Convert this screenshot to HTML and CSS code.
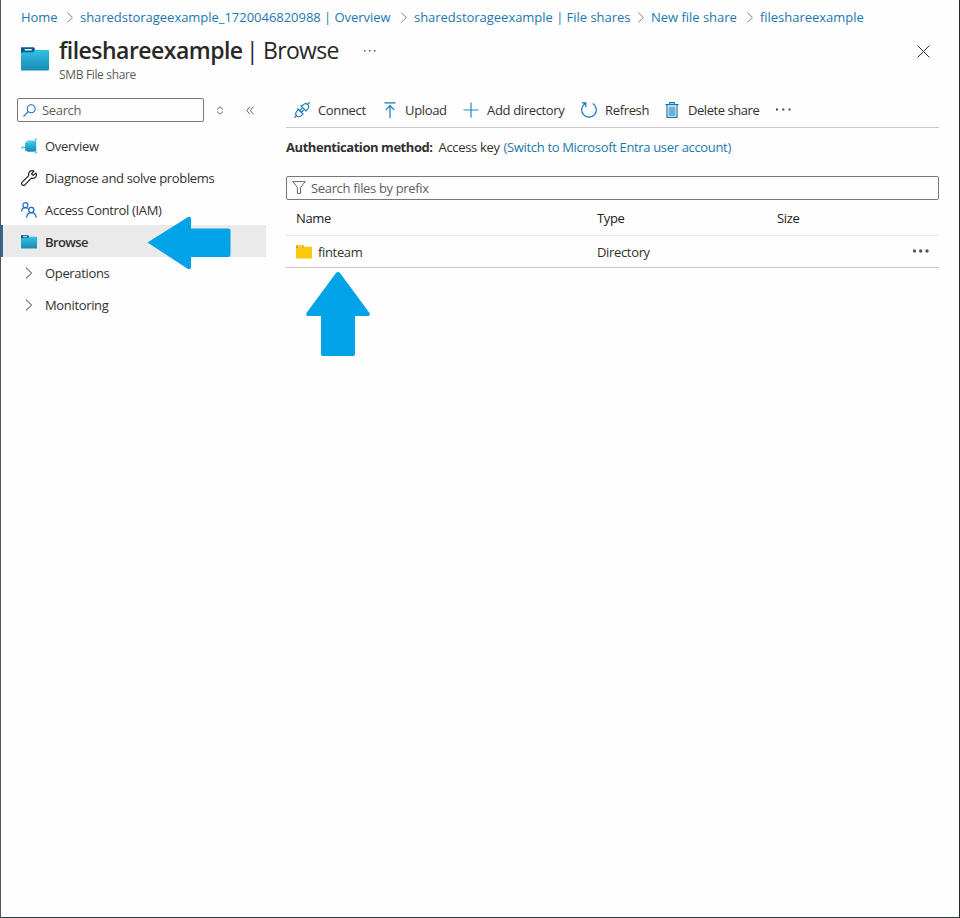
FILE: index.html
```html
<!DOCTYPE html>
<html lang="en">
<head>
    <meta charset="UTF-8">
    <meta name="viewport" content="width=device-width, initial-scale=1.0">
    <title>fileshareexample | Browse</title>
    <link rel="stylesheet" href="styles.css">
</head>
<body>
    <svg width="0" height="0" class="defs">
        <defs>
            <linearGradient id="blue" x1="0" y1="0" x2="0" y2="1">
                <stop offset="0" stop-color="#32c8ea"/>
                <stop offset="1" stop-color="#198ab3"/>
            </linearGradient>
            <symbol id="folder" viewBox="0 0 28 24">
                <path d="M0 1h12.5l1.6 2H28v19.5a1 1 0 0 1-1 1H1a1 1 0 0 1-1-1z" fill="url(#blue)"/>
                <path d="M0 .3h12.3a1.6 1.6 0 0 1 1.4 1.2l.2 1.3-1.6 2.4H2.4L0 5.8z" fill="#005b97"/>
                <rect x="3.5" y="2" width="7.5" height="1.6" rx=".8" fill="#e8f8fd"/>
            </symbol>
            <symbol id="chevron" viewBox="0 0 8 12">
                <path d="M1 .7L6.6 6 1 11.3" fill="none" stroke="currentColor"/>
            </symbol>
        </defs>
    </svg>

    <div class="page">
        <nav class="breadcrumb">
            <span class="crumb"><a>Home</a><svg><use href="#chevron"/></svg></span>
            <span class="crumb"><a>sharedstorageexample_1720046820988 | Overview</a><svg><use href="#chevron"/></svg></span>
            <span class="crumb"><a>sharedstorageexample | File shares</a><svg><use href="#chevron"/></svg></span>
            <span class="crumb"><a>New file share</a><svg><use href="#chevron"/></svg></span>
            <span class="crumb"><a>fileshareexample</a></span>
        </nav>

        <header class="header">
            <svg class="header-icon"><use href="#folder"/></svg>
            <div class="header-text">
                <h1><b>fileshareexample</b> <span>| Browse</span></h1>
                <p>SMB File share</p>
            </div>
            <svg class="header-more" width="12" height="3" viewBox="0 0 12 3" fill="#555"><rect y="1" width="1.5" height="1.5"/><rect x="5" y="1" width="1.5" height="1.5"/><rect x="10" y="1" width="1.5" height="1.5"/></svg>
            <svg class="close" width="13" height="13" viewBox="0 0 13 13"><path d="M.6.6l11.8 11.8M12.4.6L.6 12.4" stroke="#333"/></svg>
        </header>

        <div class="content">
            <aside class="sidebar">
                <div class="search-row">
                    <div class="search">
                        <svg width="13" height="13" viewBox="0 0 13 13" fill="none" stroke="#1474c4" stroke-width="1.1"><circle cx="8.2" cy="4.8" r="4"/><path d="M5.3 7.7L.5 12.5"/></svg>
                        <span>Search</span>
                    </div>
                    <svg class="sort" width="8" height="9" viewBox="0 0 8 9" fill="none" stroke="#666"><path d="M1 3.5L4 .8l3 2.7M1 5.5l3 2.7 3-2.7"/></svg>
                    <svg class="collapse" width="8" height="9" viewBox="0 0 8 9" fill="none" stroke="#666"><path d="M3.8.7L.8 4.5l3 3.8M7.4.7l-3 3.8 3 3.8"/></svg>
                </div>
                <ul class="menu">
                    <li>
                        <svg width="16" height="16" viewBox="0 0 16 16"><path d="M1 9.5h4M14.8 1v14" stroke="#6ccbe8"/><path d="M4 5l11-1.5v9.500l-2 .8H6.5L4 12z" fill="url(#blue)"/><path d="M4 5l2.5-2.500H14l1 1.500z" fill="#4fc8e6"/><circle cx="1.5" cy="9.5" r="1.2" fill="#69c9e4"/><circle cx="14.7" cy="1.3" r="1.1" fill="#69c9e4"/><circle cx="14.7" cy="14.6" r="1.1" fill="#69c9e4"/></svg>
                        <span>Overview</span>
                    </li>
                    <li>
                        <svg width="16" height="16" viewBox="0 0 16 16" fill="none" stroke="#222" stroke-width="1.2" stroke-linejoin="round"><path d="M14.9 3.1l-2.7 2.3-1.7-1.6 2.4-2.7c-2.1-.9-4.2-.2-5 1.7-.4 1-.3 2-.1 2.8L1.2 12.2c-.9 1-.8 2 0 2.7.8.7 1.8.7 2.6-.1l6.6-6.7c1.6.5 3.4.1 4.4-1.3.8-1.2.8-2.5.1-3.7z"/></svg>
                        <span>Diagnose and solve problems</span>
                    </li>
                    <li>
                        <svg width="16" height="16" viewBox="0 0 16 16" fill="none" stroke="#1b67c4" stroke-width="1.2"><circle cx="4.4" cy="3.2" r="2.5"/><path d="M.6 9.5c.1-2.3 1.600-3.800 3.700-3.800 1.100 0 1.900.3 2.600.9"/><circle cx="10.3" cy="8" r="2.600"/><path d="M5.600 15.700c.2-3.200 2.200-5.100 4.800-5.100s4.600 1.900 4.900 5.100"/></svg>
                        <span>Access Control (IAM)</span>
                    </li>
                    <li class="active">
                        <svg width="16" height="14"><use href="#folder"/></svg>
                        <span>Browse</span>
                        <svg class="arrow-left" width="84" height="54" viewBox="0 0 84 54"><path d="M.5 26.5L41 1q3-1 3 2v9.5h37.500q2 0 2 2V39q0 2-2 2H44v10q0 3-3 2z" fill="#00a2e8"/></svg>
                    </li>
                    <li>
                        <svg width="16" height="12"><use href="#chevron"/></svg>
                        <span>Operations</span>
                    </li>
                    <li>
                        <svg width="16" height="12"><use href="#chevron"/></svg>
                        <span>Monitoring</span>
                    </li>
                </ul>
            </aside>

            <main class="main">
                <div class="toolbar">
                    <div class="button">
                        <svg width="16" height="16" viewBox="0 0 16 16" fill="none" stroke="#1474b8" stroke-width="1.1"><path d="M.3 15.7l2.200-2.200M13.500 2.500L15.700.3"/><path d="M7 4l5 5 1.300-1.300c1.800-1.800 1.800-3.700.5-5s-3.200-1.300-5 .5zM4 7l5 5-1.300 1.300c-1.800 1.800-3.700 1.800-5 .5s-1.300-3.200.5-5zM5.700 8.700l2.300-2.300M7.300 10.300l2.300-2.300"/></svg>
                        <span>Connect</span>
                    </div>
                    <div class="button">
                        <svg width="16" height="16" viewBox="0 0 16 16" fill="none" stroke="#1474b8" stroke-width="1.2"><path d="M3.5.8h11M9 16V3.5M4.8 7.8L9 3.5l4.2 4.3"/></svg>
                        <span>Upload</span>
                    </div>
                    <div class="button">
                        <svg width="16" height="16" viewBox="0 0 16 16" stroke="#2c83c3" stroke-width="1.2"><path d="M.5 8h15M8 .5v15"/></svg>
                        <span>Add directory</span>
                    </div>
                    <div class="button">
                        <svg width="16" height="16" viewBox="0 0 16 16" fill="none" stroke="#1474b8" stroke-width="1.2"><path d="M11.8 1.6A7.3 7.3 0 1 1 4.2 1.6M1 .9h3.8v4"/></svg>
                        <span>Refresh</span>
                    </div>
                    <div class="button">
                        <svg width="16" height="16" viewBox="0 0 16 16" fill="none" stroke="#1474b8" stroke-width="1.2"><path d="M1.5 2.6h13M5.7 2.4V.7h4.6v1.7M3 2.8v12.6h10V2.8"/><path d="M4.5 4.5h7V14h-7z" fill="#70afd7" stroke="none"/></svg>
                        <span class="delete">Delete share</span>
                    </div>
                    <svg class="more" width="15" height="3" viewBox="0 0 15 3" fill="#444"><rect y=".5" width="2" height="2"/><rect x="6.3" y=".5" width="2" height="2"/><rect x="12.6" y=".5" width="2" height="2"/></svg>
                </div>

                <div class="auth">
                    <b>Authentication method:</b>
                    <span>Access key</span>
                    <a>(Switch to Microsoft Entra user account)</a>
                </div>

                <div class="filter">
                    <svg width="14" height="13" viewBox="0 0 14 13" fill="none" stroke="#666"><path d="M.8.6h12.4L8.6 6.5v5.9H5.4V6.5z"/></svg>
                    <span>Search files by prefix</span>
                </div>

                <table class="files">
                    <thead>
                        <tr>
                            <th class="name">Name</th>
                            <th class="type">Type</th>
                            <th>Size</th>
                            <th class="actions"></th>
                        </tr>
                    </thead>
                    <tbody>
                        <tr>
                            <td>
                                <div class="file">
                                    <svg width="16" height="14" viewBox="0 0 16 14"><path d="M0 .5h7l1 1.2h8V13a.6.6 0 0 1-.6.6H.6A.6.6 0 0 1 0 13z" fill="#fdc90c"/><path d="M0 .4h7.3l.7 1.2-1 1.5H1.2L0 3.5z" fill="#d9a411"/><rect x="2" y="1.3" width="4.3" height="1" fill="#fff2c0"/></svg>
                                    <span>finteam</span>
                                    <svg class="arrow-up" width="66" height="86" viewBox="0 0 66 86"><path d="M31 2q2-2 4 0l29.5 40q1 3-1.5 3H50v38q0 2-2 2H18q-2 0-2-2V45H3q-2.5 0-1.5-3z" fill="#00a2e8"/></svg>
                                </div>
                            </td>
                            <td>Directory</td>
                            <td></td>
                            <td><svg class="row-more" width="18" height="4" viewBox="0 0 18 4" fill="#555"><circle cx="3.5" cy="2" r="1.7"/><circle cx="9.7" cy="2" r="1.7"/><circle cx="16" cy="2" r="1.7"/></svg></td>
                        </tr>
                    </tbody>
                </table>
            </main>
        </div>
    </div>
</body>
</html>
```
FILE: styles.css
```css
* {
    box-sizing: border-box;
}
body {
    margin: 0;
    font-family: "Open Sans", "Noto Sans", sans-serif;
    font-size: 13px;
    line-height: 18px;
    letter-spacing: -0.34px;
    color: #323130;
    background-color: #fefefe;
}
svg {
    display: block;
    flex: none;
}
.defs {
    position: absolute;
}
.page {
    height: 918px;
    border-left: 1px solid #55555a;
    border-right: 1px solid #1c2a36;
    border-bottom: 1px solid #243e48;
    overflow: hidden;
}
a {
    color: #1d78ae;
}
.breadcrumb {
    display: grid;
    grid-template-columns: 59px 334px 237px 109px auto;
    padding: 8px 0 0 20px;
    letter-spacing: -0.03px;
}
.crumb {
    display: flex;
    justify-content: space-between;
    align-items: center;
    white-space: nowrap;
}
.crumb svg {
    width: 8px;
    height: 11px;
    margin-right: 6px;
    color: #777;
}
.header {
    display: flex;
    height: 72px;
    padding: 8px 29px 0 20px;
}
.header-icon {
    width: 28px;
    height: 24px;
    margin: 13px 10px 0 0;
}
.header-text {
    width: 305px;
}
h1 {
    margin: 0;
    font-size: 23px;
    line-height: 33px;
    font-weight: 400;
    letter-spacing: -0.7px;
    white-space: nowrap;
    color: #292827;
}
h1 b {
    font-weight: 600;
    letter-spacing: -0.52px;
}
h1 span {
    margin-left: -2px;
}
p {
    margin: 0;
    font-size: 12px;
    line-height: 16px;
    color: #605e5c;
}
.header-more {
    margin-top: 15px;
}
.close {
    margin: 11px 0 0 auto;
}
.content {
    display: flex;
}
.sidebar {
    width: 265px;
}
.search-row {
    display: flex;
    align-items: center;
    padding-left: 16px;
}
.search {
    display: flex;
    align-items: center;
    width: 187px;
    height: 24px;
    padding-left: 5px;
    border: 1px solid #777;
    border-radius: 2px;
    color: #605e5c;
}
.search span {
    margin-left: 6px;
}
.sort {
    margin-left: 12px;
}
.collapse {
    margin-left: 22px;
}
.menu {
    list-style: none;
    margin: 8px 0 0;
    padding: 0;
}
.menu li {
    position: relative;
    display: flex;
    align-items: center;
    gap: 8px;
    height: 32px;
    padding-left: 20px;
}
.menu .active {
    margin-top: -1px;
    padding: 1px 0 0 18px;
    border-left: 2px solid #2b6a9e;
    background-color: #ebeaea;
    font-weight: 600;
    letter-spacing: -0.6px;
}
.arrow-left {
    position: absolute;
    left: 144px;
    top: -9px;
}
.main {
    width: 653px;
    margin-left: 20px;
}
.toolbar {
    display: grid;
    grid-template-columns: 87px 82px 118px 83px 112px auto;
    align-items: center;
    height: 30px;
    padding: 0 0 6px 8px;
    border-bottom: 1px solid #c8c8c8;
    white-space: nowrap;
}
.button {
    display: flex;
    align-items: center;
    gap: 8px;
}
.delete {
    letter-spacing: -0.45px;
}
.auth {
    display: flex;
    padding: 10px 0 20px;
    white-space: nowrap;
}
.auth b {
    letter-spacing: -0.44px;
}
.auth span {
    margin: 0 4px 0 6px;
}
.filter {
    display: flex;
    align-items: center;
    gap: 5px;
    height: 24px;
    padding-left: 5px;
    border: 1px solid #777;
    border-radius: 2px;
    color: #605e5c;
}
.filter svg {
    margin-top: -2px;
}
.files {
    width: 100%;
    table-layout: fixed;
    border-collapse: separate;
    border-spacing: 0;
    text-align: left;
}
th, td {
    padding: 0;
    font-weight: 400;
}
th {
    height: 36px;
    border-bottom: 1px solid #e6e6e6;
    color: #222;
}
td {
    height: 32px;
    border-bottom: 1px solid #c4c6c6;
}
.name {
    width: 311px;
    padding-left: 10px;
}
.type {
    width: 180px;
}
.actions {
    width: 28px;
}
.row-more {
    margin-top: -2px;
}
.file {
    position: relative;
    display: flex;
    align-items: center;
    gap: 6px;
    padding-left: 10px;
}
.arrow-up {
    position: absolute;
    left: 19px;
    top: 28px;
}
```
